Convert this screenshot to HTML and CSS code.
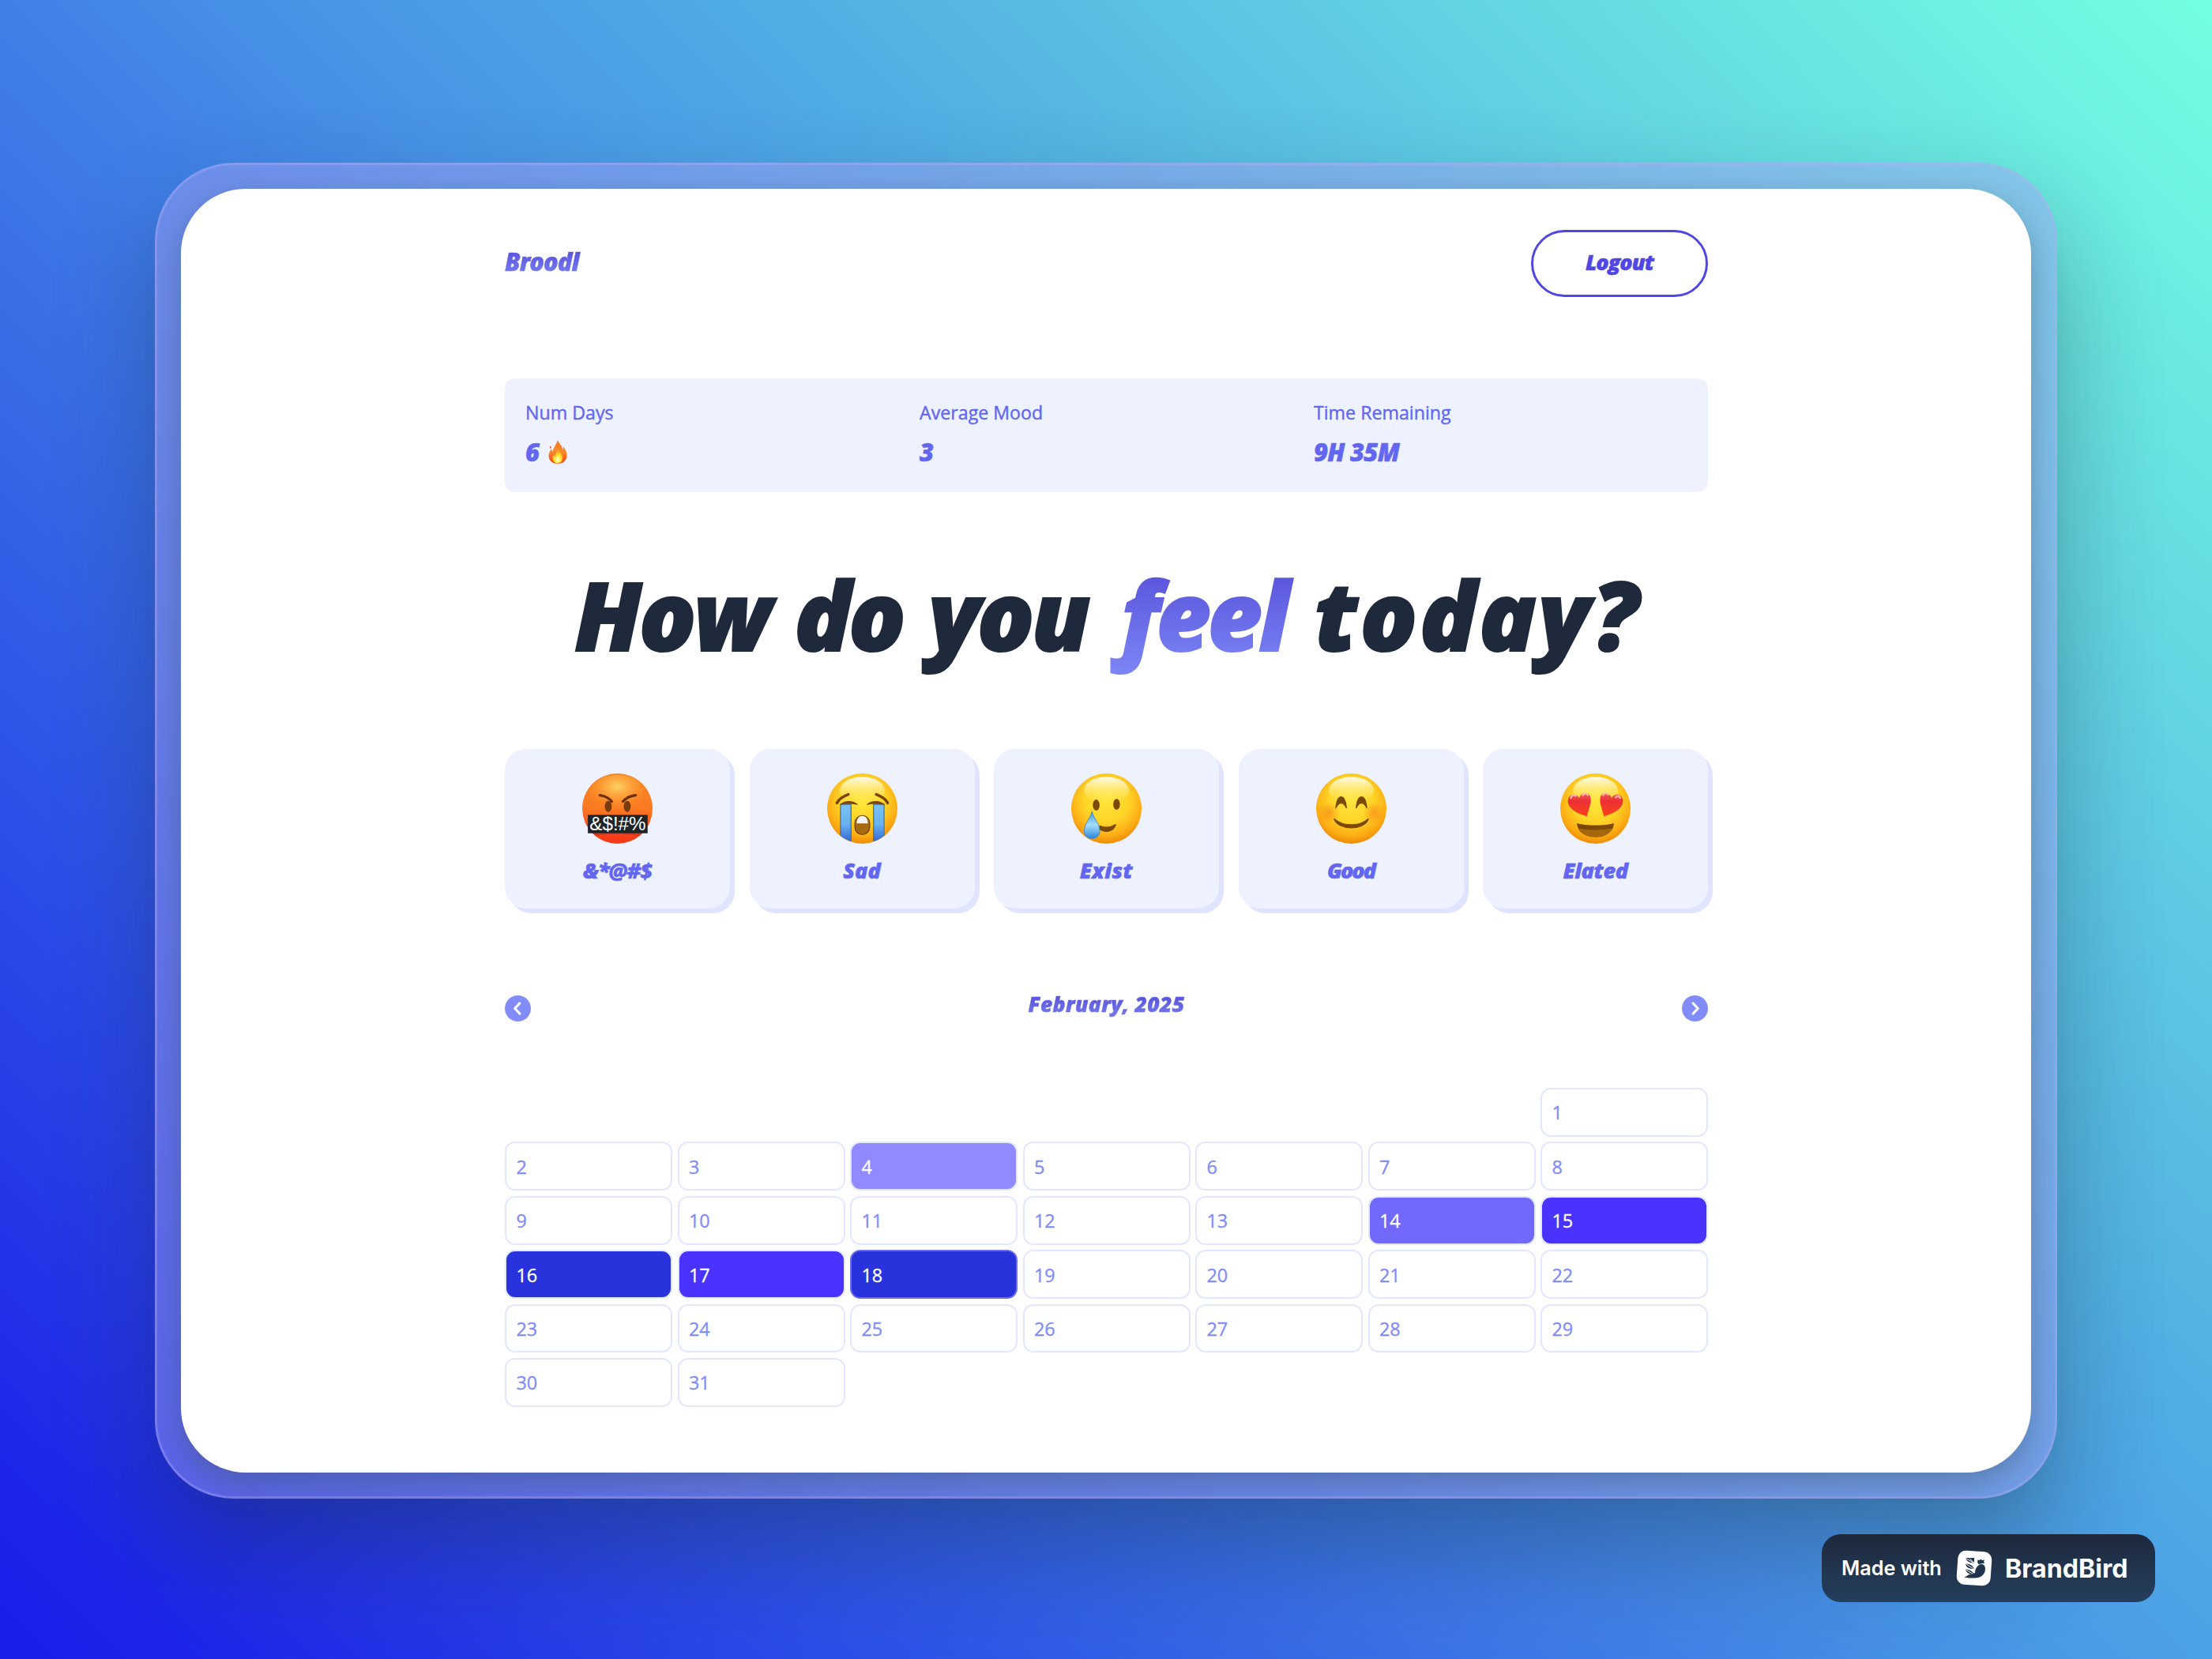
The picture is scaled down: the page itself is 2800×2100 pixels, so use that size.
FILE: index.html
```html
<!DOCTYPE html>
<html lang="en">
<head>
<meta charset="utf-8">
<title>Broodl</title>
<link rel="stylesheet" href="styles.css">
</head>
<body>
<svg class="defs" width="0" height="0" aria-hidden="true">
  <defs>
    <radialGradient id="face" cx=".5" cy=".38" r=".64">
      <stop offset="0" stop-color="#ffe63c"/><stop offset=".5" stop-color="#ffd426"/><stop offset=".8" stop-color="#fdac14"/><stop offset="1" stop-color="#ea8508"/>
    </radialGradient>
    <linearGradient id="shine" x1="0" y1="0" x2="0" y2="1">
      <stop offset="0" stop-color="#fff" stop-opacity=".9"/><stop offset="1" stop-color="#ffef6a" stop-opacity="0"/>
    </linearGradient>
    <linearGradient id="rage" x1="0" y1="0" x2="0" y2="1">
      <stop offset="0" stop-color="#f98420"/><stop offset=".5" stop-color="#fb7a22"/><stop offset=".85" stop-color="#f8401d"/><stop offset="1" stop-color="#f23a17"/>
    </linearGradient>
    <radialGradient id="glow" cx=".5" cy=".3" r=".6">
      <stop offset="0" stop-color="#ffd266"/><stop offset="1" stop-color="#ff9a2c" stop-opacity="0"/>
    </radialGradient>
    <linearGradient id="tears" x1="0" y1="0" x2="0" y2="1">
      <stop offset="0" stop-color="#78c2f2"/><stop offset=".5" stop-color="#68b2ef"/><stop offset="1" stop-color="#2c5fd0"/>
    </linearGradient>
    <linearGradient id="drop" x1="0" y1="0" x2="0" y2="1">
      <stop offset="0" stop-color="#3f93e0"/><stop offset=".5" stop-color="#a5e0fa"/><stop offset="1" stop-color="#2b84dc"/>
    </linearGradient>
    <radialGradient id="blush"><stop offset="0" stop-color="#f5801a" stop-opacity=".65"/><stop offset="1" stop-color="#f5901a" stop-opacity="0"/></radialGradient>
    <linearGradient id="heart" x1="0" y1="0" x2="0" y2="1"><stop offset="0" stop-color="#f25a55"/><stop offset=".35" stop-color="#ec2f36"/><stop offset="1" stop-color="#fb4417"/></linearGradient>
    <linearGradient id="flame" x1="0" y1="0" x2="0" y2="1"><stop offset="0" stop-color="#f9741f"/><stop offset=".5" stop-color="#fa8a2c"/><stop offset="1" stop-color="#ff3d12"/></linearGradient>
    <radialGradient id="core" cx=".5" cy=".75" r=".6"><stop offset="0" stop-color="#fffde0"/><stop offset=".5" stop-color="#ffe92e"/><stop offset="1" stop-color="#ffa51f"/></radialGradient>
    <clipPath id="disc"><circle cx="50" cy="50" r="49.5"/></clipPath>
  </defs>
</svg>

<div class="frame">
  <main class="window">
    <header class="topbar">
      <span class="brand">Broodl</span>
      <button class="logout">Logout</button>
    </header>

    <section class="stats">
      <div><p class="stat-label">Num Days</p><p class="stat-value">6
        <svg class="fire" viewBox="0 0 24 30"><path d="M12 0c1 4 6 7 6 12 1-1 1.200-2 1.300-3.500C22 12 24 16 23.500 20.500 23 26 18.500 30 12 30S.8 26 .5 20.500C.3 17 2 14 4 11c.3 2 .8 3 1.800 4C6 9 10.500 6 12 0z" fill="url(#flame)"/><path d="M2 8c1.500-1 2.200.8 1.200 2.200C2.500 11.500 1.500 10 2 8z" fill="#fb5520"/><path d="M12.500 11c.5 3 5.500 6 5.700 11 .1 4.500-2.700 7.500-6.200 7.500s-6.600-2.500-6.500-6.500c0-2 .8-3.500 1.700-5 .5 1.500 1 2 1.800 2.500C9 16 12.500 14.500 12.500 11z" fill="url(#core)"/></svg></p></div>
      <div><p class="stat-label">Average Mood</p><p class="stat-value">3</p></div>
      <div><p class="stat-label">Time Remaining</p><p class="stat-value">9H 35M</p></div>
    </section>

    <h1 class="question"><span class="q-start">How do you</span><span class="q-accent">feel</span><span class="q-end">today?</span></h1>

    <section class="moods">
      <button class="mood">
        <svg class="emoji" viewBox="0 0 100 100"><circle cx="50" cy="50" r="50" fill="url(#rage)"/><ellipse cx="50" cy="30" rx="40" ry="28" fill="url(#glow)"/><g clip-path="url(#disc)"><path d="M8 85h84v8c-20-9-64-9-84 0z" fill="#d42a08" opacity=".6"/></g><path d="M25 31c8 1 13 4 17 9M76 31c-8 1-14 4-18 9" fill="none" stroke="#6b3006" stroke-width="3.600" stroke-linecap="round"/><ellipse cx="37" cy="47" rx="5" ry="8" fill="#7b3a0a"/><ellipse cx="64" cy="47" rx="5" ry="8" fill="#7b3a0a"/><path d="M8 59h85v26H8z" fill="#1e2428"/><text x="50.500" y="81" class="censor" textLength="80" lengthAdjust="spacingAndGlyphs">&amp;$!#%</text></svg>
        <span class="l0">&amp;*@#$</span>
      </button>
      <button class="mood">
        <svg class="emoji" viewBox="0 0 100 100"><circle cx="50" cy="50" r="50" fill="url(#face)"/><ellipse cx="50" cy="24" rx="32" ry="19" fill="url(#shine)"/><path d="M14 42c3-6 8-9 16-12M86 42c-3-6-8-9-16-12" fill="none" stroke="#7a4408" stroke-width="4" stroke-linecap="round"/><g clip-path="url(#disc)"><path d="M19 44h15v56H19zM66 44h15v56H66z" fill="url(#tears)" stroke="#3d6fae" stroke-width="1.400"/></g><path d="M18 45c5-8 22-7 26 0-7-2-18-2-26 0zM82 45c-5-8-22-7-26 0 7-2 18-2 26 0z" fill="#7a4408"/><rect x="39.500" y="60" width="21" height="27" rx="10.500" fill="#a86a0e" stroke="#7a4408" stroke-width="1.500"/><path d="M42 71c0-14 16-14 16 0z" fill="#f4f4f6"/></svg>
        <span class="l1">Sad</span>
      </button>
      <button class="mood">
        <svg class="emoji" viewBox="0 0 100 100"><circle cx="50" cy="50" r="50" fill="url(#face)"/><ellipse cx="50" cy="24" rx="32" ry="19" fill="url(#shine)"/><ellipse cx="35.500" cy="45" rx="4.800" ry="7.800" fill="#7b4a08"/><ellipse cx="64.500" cy="44" rx="4.800" ry="7.800" fill="#7b4a08"/><path d="M38 77c10 9 22 5 25-4-8 5-14 5-22 2z" fill="#7b4a08" stroke="#7b4a08" stroke-width="2" stroke-linejoin="round"/><path d="M29.500 54c3 12 11 17 11 28 0 7-5 10.500-11 10.500S18.500 89 18.500 82c0-11 8-16 11-28z" fill="url(#drop)" stroke="#338bd8" stroke-width="1"/></svg>
        <span class="l2">Exist</span>
      </button>
      <button class="mood">
        <svg class="emoji" viewBox="0 0 100 100"><circle cx="50" cy="50" r="50" fill="url(#face)"/><ellipse cx="50" cy="24" rx="32" ry="19" fill="url(#shine)"/><circle cx="18" cy="56" r="16" fill="url(#blush)"/><circle cx="82" cy="56" r="16" fill="url(#blush)"/><path d="M28 49c2-21 13-21 15 0-4-9-11-9-15 0zM57 49c2-21 13-21 15 0-4-9-11-9-15 0z" fill="#7b4a08" stroke="#7b4a08" stroke-width="1.500" stroke-linejoin="round"/><path d="M26 65c12 11 36 11 48 0-6 16-42 16-48 0z" fill="#7b4a08" stroke="#7b4a08" stroke-width="2" stroke-linejoin="round"/></svg>
        <span class="l3">Good</span>
      </button>
      <button class="mood">
        <svg class="emoji" viewBox="0 0 100 100"><circle cx="50" cy="50" r="50" fill="url(#face)"/><ellipse cx="50" cy="24" rx="32" ry="19" fill="url(#shine)"/><path d="M38 61C23 57 9 49 11 37c2-9 13-9 16-2 2-8 14-10 16-1 2 8-3 17-5 27z" fill="url(#heart)"/><path d="M62 61c15-4 29-12 27-24-2-9-13-9-16-2-2-8-14-10-16-1-2 8 3 17 5 27z" fill="url(#heart)"/><path d="M15 35c1-4 5-5 7-3M32 31c2-3 6-3 7 0M61 31c1-3 5-4 7-1M79 34c2-3 5-2 6 1" stroke="#ffb9b0" stroke-width="2.500" stroke-linecap="round" fill="none"/><path d="M24 71c15 4 37 4 52 0 1 12-12 20-26 20S23 83 24 71z" fill="#a5660c"/><path d="M24 71c15 4 37 4 52 0 0 3-1 5-2 7-15 3-33 3-48 0-1-2-2-4-2-7z" fill="#7b4a08"/></svg>
        <span class="l4">Elated</span>
      </button>
    </section>

    <nav class="month">
      <svg class="arrow" viewBox="0 0 33 33"><circle cx="16.500" cy="16.500" r="16.500"/><path d="M18.800 10l-6 6.500 6 6.500"/></svg>
      <h2>February, 2025</h2>
      <svg class="arrow" viewBox="0 0 33 33"><circle cx="16.500" cy="16.500" r="16.500"/><path d="M14.200 10l6 6.500-6 6.500"/></svg>
    </nav>

    <section class="calendar">
      <div class="day first">1</div>
      <div class="day">2</div><div class="day">3</div><div class="day sad">4</div><div class="day">5</div><div class="day">6</div><div class="day">7</div><div class="day">8</div>
      <div class="day">9</div><div class="day">10</div><div class="day">11</div><div class="day">12</div><div class="day">13</div><div class="day exist">14</div><div class="day good">15</div>
      <div class="day elated">16</div><div class="day good">17</div><div class="day elated today">18</div><div class="day">19</div><div class="day">20</div><div class="day">21</div><div class="day">22</div>
      <div class="day">23</div><div class="day">24</div><div class="day">25</div><div class="day">26</div><div class="day">27</div><div class="day">28</div><div class="day">29</div>
      <div class="day">30</div><div class="day">31</div>
    </section>
  </main>
</div>

<aside class="badge">
  <span class="made">Made with</span>
  <svg class="bird" viewBox="0 0 46 46"><rect x="1.500" y="1.500" width="43" height="43" rx="10" fill="#fff" transform="rotate(4 23 23)"/><g fill="#20344e"><path d="M12 10h11v6.500c-5 0-10-2-11-6.500z"/><path d="M12 17.500c5 0 9 1.500 11 6.500-6 0-10-1.500-11-6.500z"/><path d="M12 24.500c4 0 8 1.500 10 5.500-5 1-9-1-10-5.500z"/><path d="M10 34.500c4-1 6-4 10-4.500l4-1c0-6 4-11 8-11 3 0 5 2 5 6 0 7-6 11.500-13 11.500-5 0-9 0-14-1z"/><path d="M27.500 12.500l2.500.5 1-1.500 2 1.500 3-.5-1 2.500 1.500 1.500-8 1.500c-1.500-1.500-1.500-3.500-1-5.500z"/></g><path d="M12 10.500l11 6M17 10.500l6 6M12.500 17.500l10 6.500M23.500 10v19M12.500 25l8.500 5" stroke="#fff" stroke-width="1" fill="none"/></svg>
  <span class="name">BrandBird</span>
</aside>
</body>
</html>
```
FILE: styles.css
```css
* { box-sizing: border-box; margin: 0; padding: 0; }

body {
  position: relative;
  width: 2800px;
  height: 2100px;
  padding-top: 206px;
  overflow: hidden;
  font-family: "Open Sans", sans-serif;
  background: linear-gradient(45deg, #1a1ee9 0%, #1d26e8 5%, #4792e6 50%, #51ade3 63%, #74ffe0 100%);
}

.defs { position: absolute; }

.frame {
  width: 2408px;
  height: 1691px;
  margin: 0 auto;
  padding: 30px;
  border: 3px solid rgba(178, 172, 240, .36);
  border-radius: 100px;
  background: rgba(160, 158, 240, .47);
  box-shadow: 0 66px 130px rgba(20, 40, 50, .33);
}

.window {
  height: 1625px;
  padding: 51px 409px 0 410px;
  border-radius: 82px;
  background: #fff;
  box-shadow: 0 14px 40px rgba(50, 80, 90, .42);
}

button { border: 0; background: none; font: inherit; }

.brand, .logout, .stat-value, .question, .mood, .month h2 {
  font-weight: 800;
  font-style: italic;
  -webkit-text-stroke-width: .5px;
}

.brand, .month h2, .q-accent {
  color: transparent;
  background: linear-gradient(#4f46d5, #818cf8);
  -webkit-background-clip: text;
  background-clip: text;
}

.topbar {
  display: flex;
  justify-content: space-between;
  align-items: center;
  height: 86px;
}

.brand {
  padding: 0 8px 4px 0;
  font-size: 31px;
  letter-spacing: -1px;
}

.logout {
  width: 224px;
  height: 85px;
  padding-bottom: 4px;
  border: 3px solid #4f46e5;
  border-radius: 43px;
  color: #4f46e5;
  font-size: 27px;
  letter-spacing: -.9px;
}

.stats {
  display: grid;
  grid-template-columns: repeat(3, 1fr);
  gap: 26px;
  height: 144px;
  margin-top: 103px;
  padding: 27px 26px 0;
  border-radius: 13px;
  background: #eef2ff;
  color: #6366f1;
}

.stat-label {
  font-size: 23.200px;
  line-height: 33px;
  font-weight: 500;
  -webkit-text-stroke-width: .4px;
}

.stat-value {
  display: flex;
  align-items: center;
  gap: 12px;
  margin-top: 10px;
  font-size: 31px;
  line-height: 46px;
  letter-spacing: -.7px;
}

.fire { width: 24px; height: 30px; }

.question {
  display: flex;
  margin-top: 65px;
  padding-left: 88px;
  color: #1e293b;
  font-size: 120px;
  line-height: 180px;
  white-space: nowrap;
  -webkit-text-stroke-width: 2px;
}

.q-start { letter-spacing: -3.800px; word-spacing: 5px; }
.q-accent { margin-left: 26px; padding: 0 16px; letter-spacing: -4.500px; }
.q-end { margin-left: 20px; letter-spacing: 2.600px; }

.moods {
  display: grid;
  grid-template-columns: repeat(5, 1fr);
  gap: 24.500px;
  margin-top: 80px;
}

.mood {
  display: flex;
  flex-direction: column;
  align-items: center;
  gap: 16px;
  height: 202px;
  padding-top: 31px;
  border-radius: 27px;
  background: #eef2ff;
  box-shadow: 6px 6px 0 #e0e4ff;
  color: #6366f1;
  font-size: 27px;
  line-height: 36px;
}

.l0 { letter-spacing: -1px; }
.l2 { letter-spacing: .5px; }
.l3 { letter-spacing: -2px; }
.l4 { letter-spacing: -.4px; }

.emoji { width: 89px; height: 89px; flex: none; }

.censor {
  fill: #fff;
  font: 500 26px "Liberation Sans", sans-serif;
  text-anchor: middle;
}

.month {
  display: flex;
  justify-content: space-between;
  align-items: flex-start;
  height: 33px;
  margin-top: 110px;
}

.month h2 {
  font-size: 26.500px;
  line-height: 21px;
  letter-spacing: .35px;
  padding: 8px 0 16px;
  margin-top: -7px;
}

.arrow { width: 33px; height: 33px; }
.arrow circle { fill: #818cf8; }
.arrow path {
  fill: none;
  stroke: #fff;
  stroke-width: 3.200;
  stroke-linecap: round;
  stroke-linejoin: round;
}

.calendar {
  display: grid;
  grid-template-columns: repeat(7, 1fr);
  grid-auto-rows: 61.900px;
  gap: 6.500px;
  margin-top: 84px;
}

.day {
  display: flex;
  align-items: center;
  padding: 1px 13px 0 12.500px;
  border: 2px solid #e0e7ff;
  border-radius: 13px;
  color: #818cf8;
  font-size: 23.400px;
  -webkit-text-stroke-width: .3px;
}

.first { grid-column: 7; }
.sad, .exist, .good, .elated { color: #fff; }
.sad { background: #9089ff; }
.exist { background: #7168fc; }
.good { background: #4a32ff; }
.elated { background: #2833dc; }
.today { border-color: #6a6cec; }

.badge {
  position: absolute;
  left: 2306px;
  top: 1942px;
  display: flex;
  align-items: center;
  width: 422px;
  height: 86px;
  padding-left: 25px;
  border-radius: 24px;
  background: linear-gradient(#1e293b, #243f5e);
  color: #fff;
  font-family: Inter, sans-serif;
}

.made { width: 145px; font-size: 25.200px; font-weight: 600; }
.bird { width: 46px; height: 46px; }
.name { margin-left: 16px; font-size: 32.200px; font-weight: 700; }
```
